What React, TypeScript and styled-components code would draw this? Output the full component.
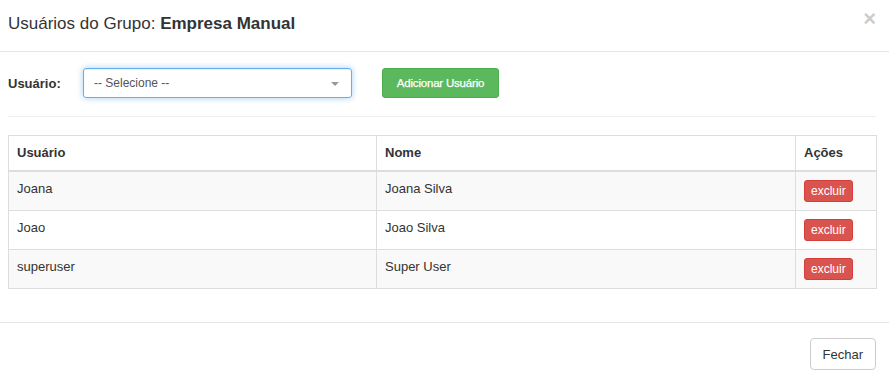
import React from 'react'
import styled, { createGlobalStyle } from 'styled-components'

const GlobalStyle = createGlobalStyle`
  html, body {
    margin: 0;
    padding: 0;
    background: #fff;
  }
  body {
    font-family: "Liberation Sans", Arial, sans-serif;
    font-size: 13px;
    color: #333;
  }
  * {
    box-sizing: border-box;
  }
`

type User = {
  login: string
  name: string
}

const users: User[] = [
  { login: 'Joana', name: 'Joana Silva' },
  { login: 'Joao', name: 'Joao Silva' },
  { login: 'superuser', name: 'Super User' },
]

const Modal = styled.div`
  width: 889px;
  height: 380px;
  display: flex;
  flex-direction: column;
`

const Header = styled.div`
  height: 52px;
  border-bottom: 1px solid #e5e5e5;
  padding: 0 13px 0 8px;
  display: flex;
  justify-content: space-between;
  align-items: center;
`

const Title = styled.h4`
  margin: 0 0 2px;
  font-size: 17px;
  font-weight: normal;
  line-height: 1.1;
  color: #333;

  strong {
    font-weight: bold;
  }
`

const Close = styled.button`
  align-self: flex-start;
  margin-top: 8px;
  padding: 0;
  border: 0;
  background: transparent;
  font-family: "Liberation Sans", Arial, sans-serif;
  font-size: 22px;
  font-weight: bold;
  line-height: 1;
  color: #000;
  opacity: 0.2;
  cursor: pointer;
`

const Body = styled.div`
  padding: 16px 13px 0 8px;
`

const FormRow = styled.div`
  display: flex;
  align-items: center;
  height: 30px;
`

const Label = styled.label`
  width: 75px;
  font-weight: bold;
  font-size: 13px;
`

const Select = styled.div`
  position: relative;
  width: 269px;
  height: 30px;
  padding: 0 10px;
  display: flex;
  align-items: center;
  border: 1px solid #66afe9;
  border-radius: 3px;
  box-shadow: inset 0 1px 1px rgba(0, 0, 0, 0.075), 0 0 6px rgba(102, 175, 233, 0.6);
  font-size: 12px;
  color: #555;

  &::after {
    content: '';
    position: absolute;
    right: 12px;
    top: 13px;
    border-left: 4px solid transparent;
    border-right: 4px solid transparent;
    border-top: 4px solid #999;
  }
`

const Button = styled.button<{ $variant: 'success' | 'danger' | 'default' }>`
  font-family: "Liberation Sans", Arial, sans-serif;
  border-radius: 3px;
  cursor: pointer;
  border: 1px solid
    ${(p) => (p.$variant === 'success' ? '#4cae4c' : p.$variant === 'danger' ? '#d43f3a' : '#ccc')};
  background: ${(p) => (p.$variant === 'success' ? '#5cb85c' : p.$variant === 'danger' ? '#d9534f' : '#fff')};
  color: ${(p) => (p.$variant === 'default' ? '#333' : '#fff')};
`

const AddButton = styled(Button)`
  margin-left: 30px;
  height: 30px;
  width: 117px;
  padding: 0;
  font-size: 11.5px;
  letter-spacing: -0.2px;
  -webkit-text-stroke: 0.25px #fff;
`

const DeleteButton = styled(Button)`
  height: 22px;
  padding: 0 6px;
  font-size: 12px;
`

const CloseButton = styled(Button)`
  height: 32px;
  padding: 0 12px;
  font-size: 13px;
  border-radius: 4px;
`

const Divider = styled.hr`
  margin: 18px 0 18px;
  border: 0;
  border-top: 1px solid #eee;
`

const Table = styled.table`
  width: 868px;
  border-collapse: collapse;
  table-layout: fixed;
  border: 1px solid #ddd;
`

const Th = styled.th<{ $w: number }>`
  width: ${(p) => p.$w}px;
  text-align: left;
  font-weight: bold;
  padding: 8px;
  line-height: 18px;
  border: 1px solid #ddd;
  border-bottom-width: 2px;
`

const Row = styled.tr<{ $striped: boolean }>`
  background: ${(p) => (p.$striped ? '#f9f9f9' : '#fff')};
`

const Td = styled.td`
  padding: 8px;
  vertical-align: top;
  line-height: 18px;
  border: 1px solid #ddd;
  height: 39px;
`

const Footer = styled.div`
  margin-top: 33px;
  border-top: 1px solid #e5e5e5;
  padding: 15px 13px 0 8px;
  display: flex;
  justify-content: flex-end;
`

export default function App() {
  return (
    <Modal>
      <GlobalStyle />
      <Header>
        <Title>
          Usuários do Grupo: <strong>Empresa Manual</strong>
        </Title>
        <Close aria-label="Fechar">×</Close>
      </Header>
      <Body>
        <FormRow>
          <Label>Usuário:</Label>
          <Select>-- Selecione --</Select>
          <AddButton $variant="success">Adicionar Usuário</AddButton>
        </FormRow>
        <Divider />
        <Table>
          <thead>
            <tr>
              <Th $w={368}>Usuário</Th>
              <Th $w={419}>Nome</Th>
              <Th $w={81}>Ações</Th>
            </tr>
          </thead>
          <tbody>
            {users.map((u, i) => (
              <Row key={u.login} $striped={i % 2 === 0}>
                <Td>{u.login}</Td>
                <Td>{u.name}</Td>
                <Td>
                  <DeleteButton $variant="danger">excluir</DeleteButton>
                </Td>
              </Row>
            ))}
          </tbody>
        </Table>
      </Body>
      <Footer>
        <CloseButton $variant="default">Fechar</CloseButton>
      </Footer>
    </Modal>
  )
}
